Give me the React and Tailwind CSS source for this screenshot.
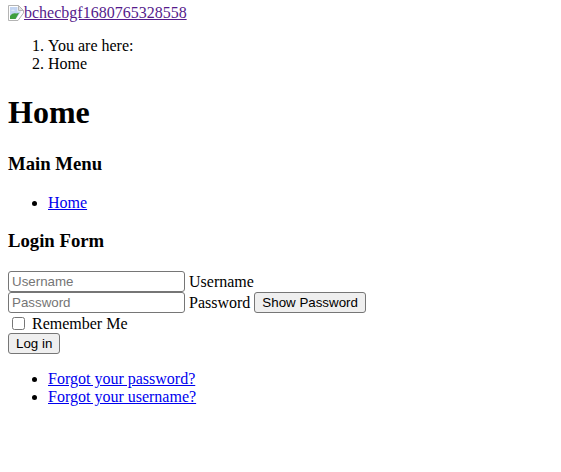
export default function App() {
  return (
    <div className="px-2 pt-[4px] font-['Liberation_Serif',serif] text-base leading-[18px] text-black bg-white min-h-[472px]">
      <a href="#" className="text-[#551a8b] underline">
        <svg width="16" height="16" viewBox="0 0 16 16" className="inline align-[-3px]">
          <path d="M0.5 0.5H10.5L15.5 5.5V8L10 15.5H0.5Z" fill="#fff" stroke="#b4b4b4" />
          <path d="M10.5 0.5V5.5H15.5Z" fill="#e4e4e4" stroke="#b4b4b4" />
          <path d="M2 2H9.5V6.5H13L8 14H2Z" fill="#c3d5f2" />
          <path d="M2 14V11C4 8.5 6 8 8 8.5L11 8L7.5 14Z" fill="#3f9f3f" />
          <path d="M3 5.5C4 4.5 6 4.5 7 5.5Z" fill="#fff" />
        </svg>
        bchecbgf1680765328558
      </a>
      <ol className="list-decimal mt-[15px] mb-[16px] pl-10">
        <li>You are here:</li>
        <li>Home</li>
      </ol>
      <h1 className="text-[32px] leading-[37px] font-bold mt-[21px] mb-[22px]">Home</h1>
      <h3 className="text-[18.72px] leading-[21px] font-bold mt-[19px] mb-[20px]">Main Menu</h3>
      <ul className="list-disc mt-4 mb-[14px] pl-10">
        <li>
          <a href="#" className="text-[#0000ee] underline">Home</a>
        </li>
      </ul>
      <h3 className="text-[18.72px] leading-[21px] font-bold mt-[18px] mb-[20px]">Login Form</h3>
      <form>
        <div className="leading-[21px] h-[21px]">
          <input
            placeholder="Username"
            className="w-[177px] h-[21px] border border-[#767676] rounded-[3px] px-[3px] font-['Liberation_Sans',sans-serif] text-[13.33px] align-top placeholder:text-[#757575]"
          />{' '}
          <label>Username</label>
        </div>
        <div className="leading-[21px] h-[21px]">
          <input
            placeholder="Password"
            className="w-[177px] h-[21px] border border-[#767676] rounded-[3px] px-[3px] font-['Liberation_Sans',sans-serif] text-[13.33px] align-top placeholder:text-[#757575]"
          />{' '}
          <label>Password</label>{' '}
          <button type="button" className="h-[21px] px-[7px] bg-[#efefef] border border-[#767676] rounded-[3px] font-['Liberation_Sans',sans-serif] text-[13.33px] leading-[15px] align-top">
            Show Password
          </button>
        </div>
        <div className="h-[20px] leading-[21px] flex items-center">
          <input type="checkbox" className="w-[13px] h-[13px] ml-[4px] mr-[7px] appearance-none bg-white border border-[#767676] rounded-[2.5px]" />
          <label>Remember Me</label>
        </div>
        <button type="button" className="block h-[21px] px-[7px] bg-[#efefef] border border-[#767676] rounded-[3px] font-['Liberation_Sans',sans-serif] text-[13.33px] leading-[15px]">
          Log in
        </button>
      </form>
      <ul className="list-disc my-4 pl-10">
        <li>
          <a href="#" className="text-[#0000ee] underline">Forgot your password?</a>
        </li>
        <li>
          <a href="#" className="text-[#0000ee] underline">Forgot your username?</a>
        </li>
      </ul>
    </div>
  );
}
